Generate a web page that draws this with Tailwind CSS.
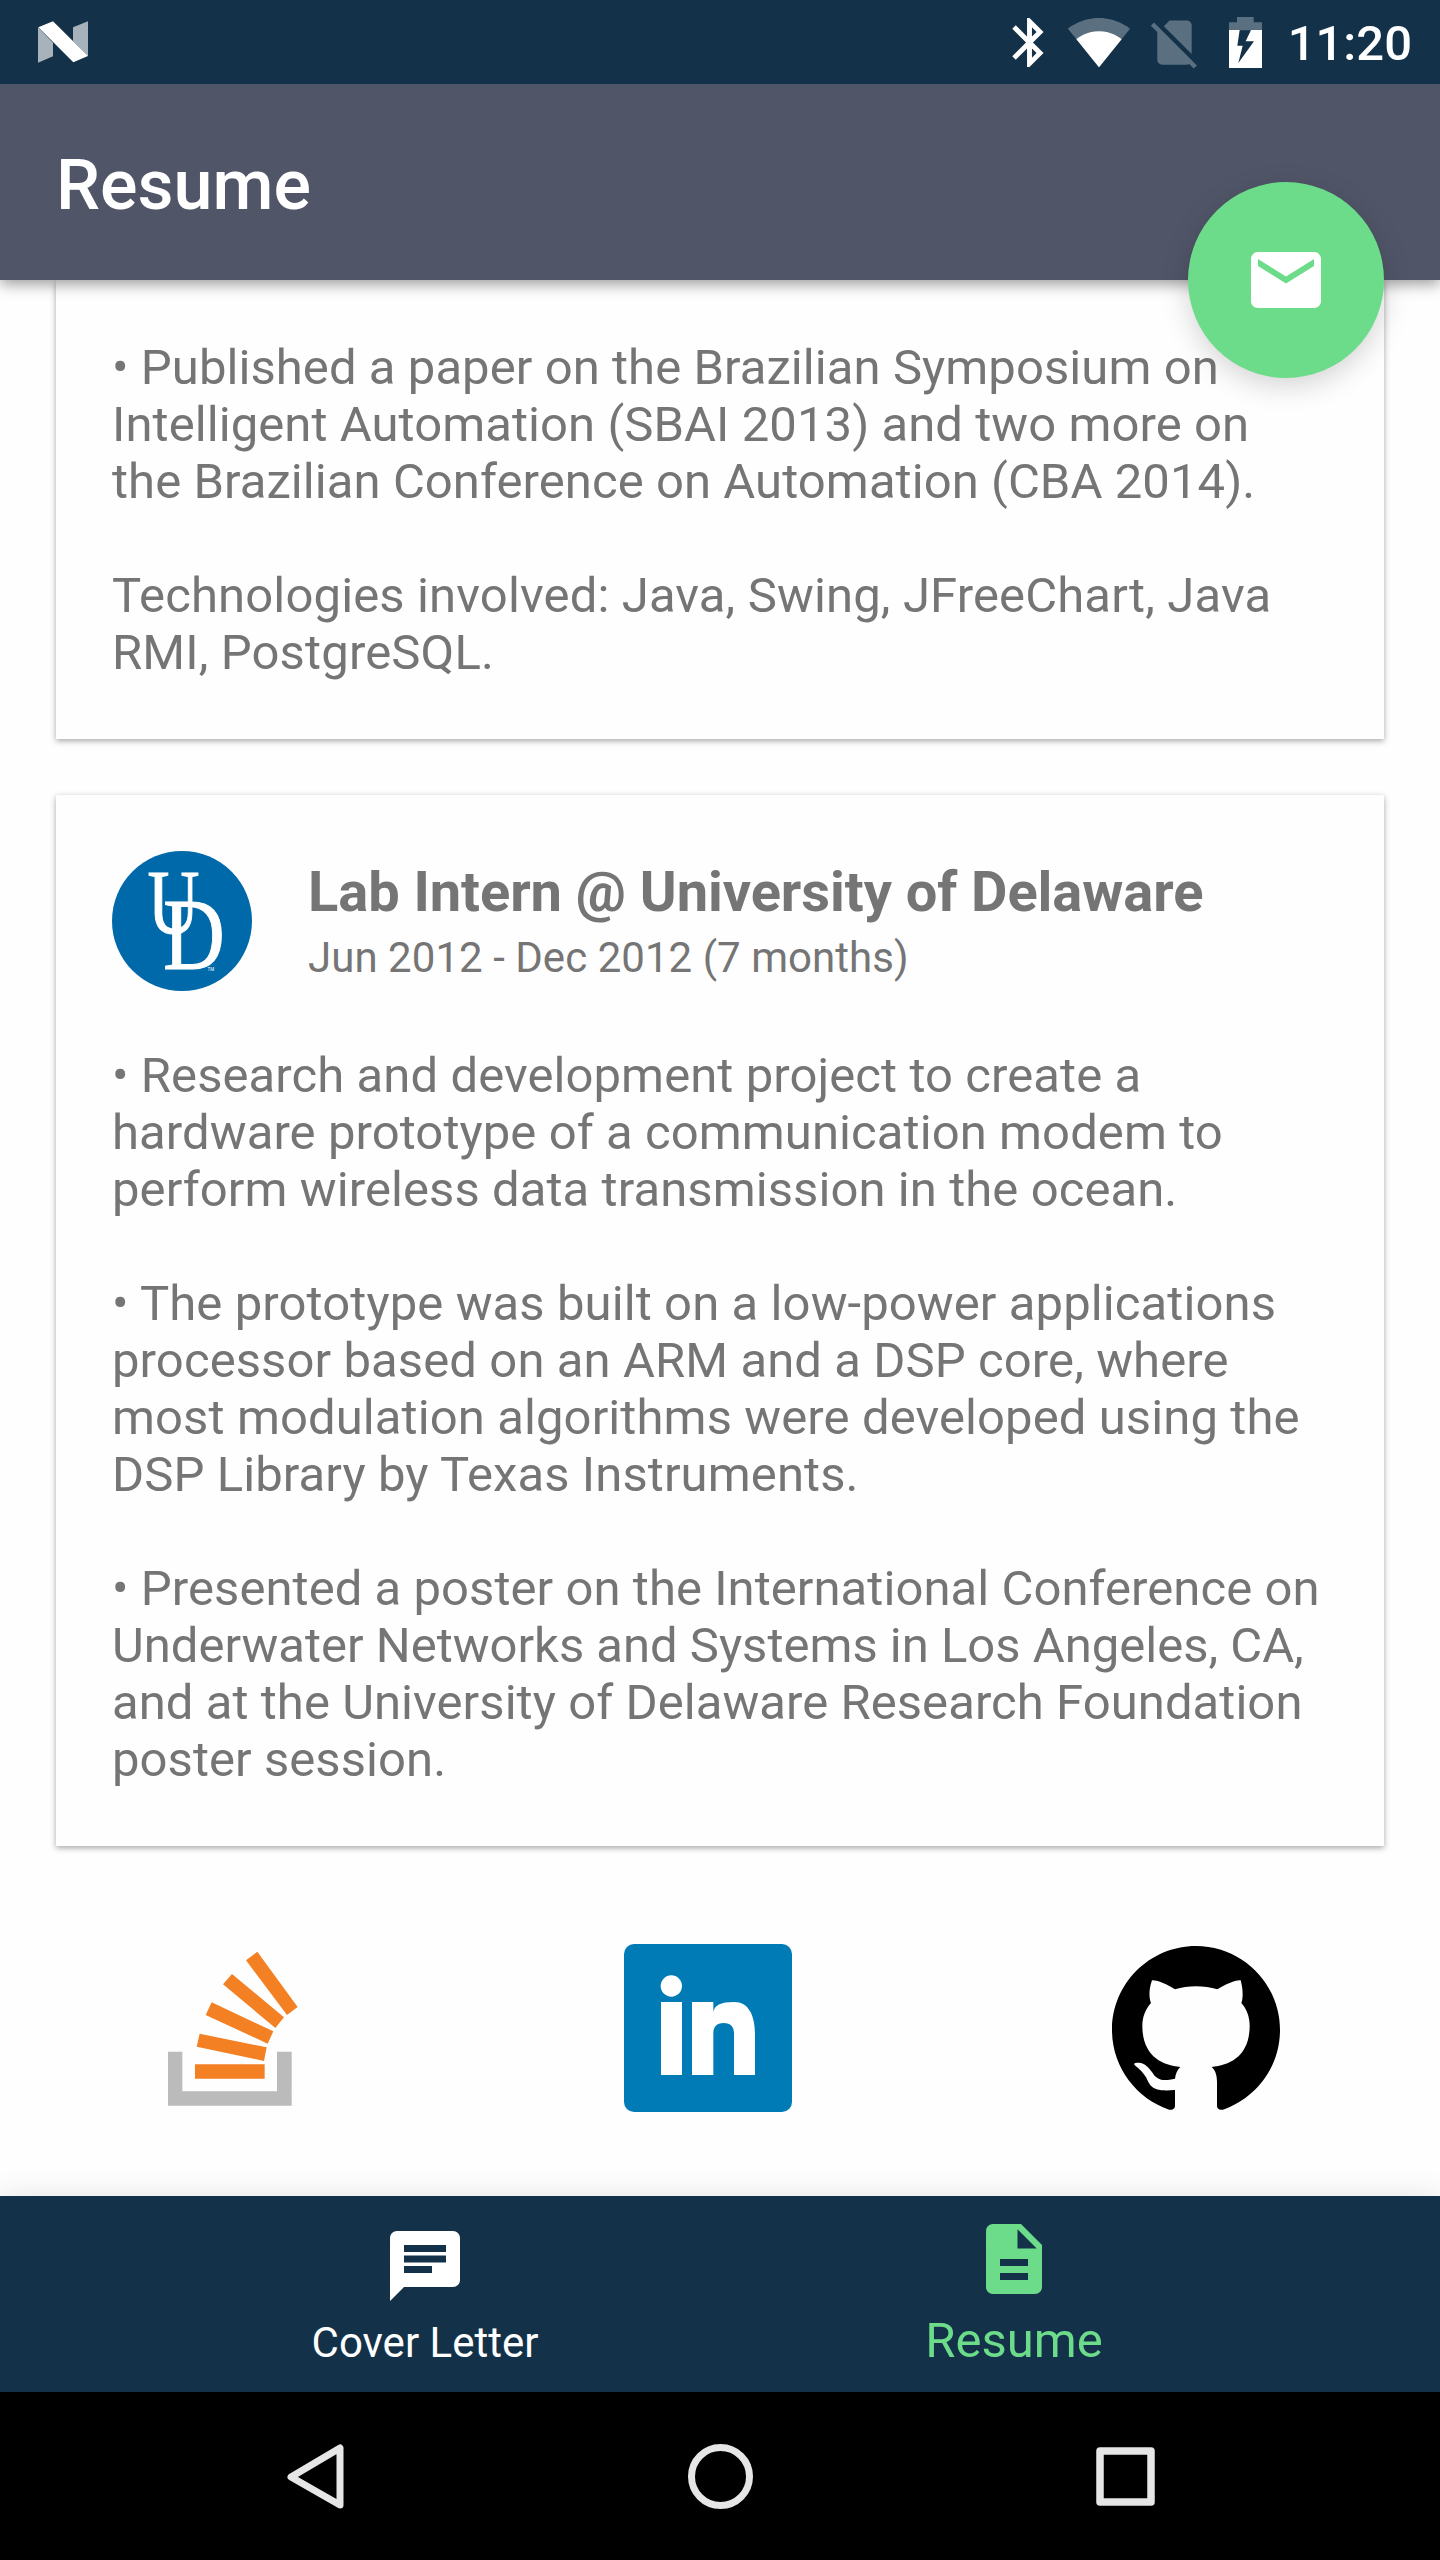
<!DOCTYPE html>
<html lang="en">
<head>
<meta charset="utf-8">
<title>Resume</title>
<script src="https://cdn.jsdelivr.net/npm/@tailwindcss/browser@4"></script>
</head>
<body class="bg-[#fefefe] font-['Roboto',sans-serif]">
<div class="relative flex h-[2560px] w-[1440px] flex-col overflow-hidden bg-[#fefefe]">

  <!-- Status bar -->
  <header class="z-20 flex h-[84px] shrink-0 items-center bg-[#133249] pl-[38px] pr-7">
    <svg class="h-[42px] w-[50px]" viewBox="114 63 150 126">
      <path fill="#a7b2bb" d="M114 82L159 128V169L114 188ZM219 82L264 64V169L219 123Z"/>
      <path fill="#fff" d="M115 82L159 64L264 168L220 187Z"/>
    </svg>
    <div class="ml-auto flex items-center">
      <svg class="h-[59px] w-[59px]" viewBox="0 0 24 24" fill="#fff"><path d="M17.71 7.71L12 2h-1v7.59L6.41 5 5 6.41 10.59 12 5 17.59 6.41 19 11 14.41V22h1l5.71-5.71-4.3-4.29 4.3-4.29zM13 5.83l1.88 1.88L13 9.59V5.83zm1.88 10.46L13 18.17v-3.76l1.88 1.88z"/></svg>
      <svg class="ml-2 h-16 w-16" viewBox="0 0 24 24" fill="#fff"><path fill="#5a7080" d="M12.01 21.49L23.64 7c-.45-.34-4.93-4-11.64-4C5.28 3 .81 6.66.36 7l11.63 14.49.01.01.01-.01z"/><path d="M3.53 10.95l8.46 10.54.01.01.01-.01 8.46-10.54C20.04 10.62 16.81 8 12 8c-4.81 0-8.04 2.62-8.47 2.95z"/></svg>
      <svg class="ml-3.5 h-[59px] w-[59px]" viewBox="0 0 24 24" fill="#5a7080"><path d="M18.99 5c0-1.1-.89-2-1.99-2h-7L7.66 5.34 19 16.68 18.99 5zM3.65 3.88L2.38 5.15 5 7.77V19c0 1.1.9 2 2 2h10.01c.35 0 .67-.1.96-.26l1.88 1.88 1.27-1.27L3.65 3.88z"/></svg>
      <svg class="ml-[25px] h-[51px] w-[33px]" viewBox="807 48 99 153">
        <path fill="#5a7080" d="M831 48H881V64H906V88H807V64H831Z"/>
        <path fill="#fff" fill-rule="evenodd" d="M807 87H906V201H807ZM839 87L832 134H848L835 186L882 121H857L873 87Z"/>
      </svg>
      <span class="ml-[26px] pt-1 text-[49px] leading-[58px] font-medium text-white">11:20</span>
    </div>
  </header>

  <!-- App bar -->
  <div class="z-10 flex h-[196px] shrink-0 items-center bg-[#505568] px-14 pt-1.5 shadow-[0_4px_14px_rgba(0,0,0,0.4)]">
    <h1 class="text-[70px] leading-[82px] font-medium text-white">Resume</h1>
  </div>

  <button class="absolute top-[182px] left-[1188px] z-30 flex h-[196px] w-[196px] items-center justify-center rounded-full bg-[#6ddc8a] shadow-[0_8px_28px_rgba(0,0,0,0.17)]" aria-label="Email">
    <svg class="h-[84px] w-[84px]" viewBox="0 0 24 24" fill="#fff"><path d="M20 4H4c-1.1 0-1.99.9-1.99 2L2 18c0 1.1.9 2 2 2h16c1.1 0 2-.9 2-2V6c0-1.1-.9-2-2-2zm0 4l-8 5-8-5V6l8 5 8-5v2z"/></svg>
  </button>

  <main class="flex min-h-0 flex-1 flex-col px-14">
    <section class="h-[459px] shrink-0 bg-[#fefefe] px-14 pt-[59px] text-[49px] leading-[57px] tracking-[0.07px] text-[#757575] shadow-[0_2px_6px_rgba(0,0,0,0.35)]">
      <p>• Published a paper on the Brazilian Symposium on<br>Intelligent Automation (SBAI 2013) and two more on<br>the Brazilian Conference on Automation (CBA 2014).</p>
      <p class="mt-[57px] tracking-[0.14px]">Technologies involved: Java, Swing, JFreeChart, Java<br>RMI, PostgreSQL.</p>
    </section>

    <section class="mt-14 h-[1051px] shrink-0 bg-[#fefefe] p-14 text-[49px] leading-[57px] text-[#757575] shadow-[0_2px_6px_rgba(0,0,0,0.35)]">
      <div class="flex items-center gap-14">
        <svg class="h-[140px] w-[140px]" viewBox="0 0 140 140">
          <circle cx="70" cy="70" r="70" fill="#0069aa"/>
          <g fill="#fff" stroke="#fff" font-family="Liberation Serif, serif">
            <text transform="translate(35.5 82) scale(.8 1)" font-size="90" stroke-width="1">U</text>
            <text transform="translate(51 118) scale(.84 1)" font-size="102" stroke-width="1">D</text>
          </g>
          <text x="95.500" y="119.500" font-size="4.500" fill="#fff" font-family="Roboto, sans-serif">TM</text>
        </svg>
        <div class="-my-2">
          <h2 class="text-[56px] leading-[66px] font-bold tracking-[-0.06px]">Lab Intern @ University of Delaware</h2>
          <p class="mt-2 text-[42px] leading-[50px] tracking-[0.04px]">Jun 2012 - Dec 2012 (7 months)</p>
        </div>
      </div>
      <p class="mt-14 tracking-[0.08px]">• Research and development project to create a<br>hardware prototype of a communication modem to<br>perform wireless data transmission in the ocean.</p>
      <p class="mt-[57px] tracking-[0.1px]">• The prototype was built on a low-power applications<br>processor based on an ARM and a DSP core, where<br>most modulation algorithms were developed using the<br>DSP Library by Texas Instruments.</p>
      <p class="mt-[57px] tracking-[0.06px]">• Presented a poster on the International Conference on<br><span class="tracking-normal">Underwater Networks and Systems in Los Angeles, CA,</span><br>and at the University of Delaware Research Foundation<br>poster session.</p>
    </section>

    <!-- Profile links -->
    <div class="mt-[98px] flex items-start pl-[92px]">
      <svg class="h-[168px] w-[168px]" viewBox="144 132 504 504">
        <path fill="#bbb" d="M204 455H247V574H531V455H575V617H204Z"/>
        <path fill="#f48024" d="M285 493H494V536H285ZM299 401L500 442L492 483L290 440ZM335 307L520 394L503 431L317 345ZM396 222L552 352L526 384L369 253ZM472 155L593 321L561 345L438 181Z"/>
      </svg>
      <svg class="ml-[308px] h-[168px] w-[168px]" viewBox="132 132 504 504">
        <rect x="132" y="132" width="504" height="504" rx="30" fill="#007bb6"/>
        <g fill="#fff"><circle cx="274" cy="258" r="32"/><rect x="243" y="306" width="63" height="219"/>
        <path d="M336 306H400V336C404 316 420 306 463 306C505 306 525 345 525 402V525H462V400C462 380 452 369 431 369C410 369 400 380 400 400V525H336Z"/></g>
      </svg>
      <svg class="ml-[320px] h-[168px] w-[168px]" viewBox="126 132 504 504">
        <path d="M378 138C239 138 126 251 126 390C126 501 198 595 297 629C310 631 315 624 315 617V570C245 577 241 558 228 532C218 514 205 504 196 497C188 490 194 488 206 488C225 489 238 504 248 519C261 540 278 545 315 536C317 520 322 510 331 501C275 495 217 468 217 377C217 350 227 327 243 309C240 302 233 278 246 241C246 241 269 239 315 268C335 262 356 259 378 259C400 259 422 262 442 268C489 239 512 241 512 241C522 278 517 302 514 309C530 327 539 350 539 377C539 468 481 495 425 501C435 510 441 524 441 545V617C441 624 446 631 459 629C558 595 630 501 630 390C630 251 517 138 378 138Z"/>
      </svg>
    </div>
  </main>

  <!-- Bottom tabs -->
  <nav class="z-10 flex h-[196px] shrink-0 justify-center gap-px bg-[#133249] pr-px shadow-[0_0_28px_rgba(0,0,0,0.11)]">
    <div class="flex w-[588px] flex-col items-center pt-7 text-[42px] leading-[50px] text-white">
      <svg class="h-[84px] w-[84px]" viewBox="0 0 24 24" fill="currentColor"><path d="M20 2H4c-1.100 0-1.990.9-1.990 2L2 22l4-4h14c1.100 0 2-.9 2-2V4c0-1.100-.9-2-2-2zM6 9h12v2H6V9zm8 5H6v-2h8v2zm4-6H6V6h12v2z"/></svg>
      <span class="mt-2.5">Cover Letter</span>
    </div>
    <div class="flex w-[588px] flex-col items-center pt-[21px] text-[49px] leading-[58px] text-[#6ddc8a]">
      <svg class="h-[84px] w-[84px]" viewBox="0 0 24 24" fill="currentColor"><path d="M14 2H6c-1.100 0-1.990.9-1.990 2L4 20c0 1.100.89 2 1.990 2H18c1.100 0 2-.9 2-2V8l-6-6zm2 16H8v-2h8v2zm0-4H8v-2h8v2zm-3-5V3.500L18.500 9H13z"/></svg>
      <span class="mt-[11px]">Resume</span>
    </div>
  </nav>

  <!-- System navigation -->
  <footer class="z-10 flex h-[168px] shrink-0 items-center justify-center gap-[321px] bg-black">
    <svg class="h-[84px] w-[84px]" viewBox="0 0 84 84" fill="none" stroke="#e6e6e6" stroke-width="7" stroke-linejoin="round"><path d="M67 14V71L18 43Z"/></svg>
    <svg class="h-[84px] w-[84px]" viewBox="0 0 84 84" fill="none" stroke="#e6e6e6" stroke-width="7"><circle cx="42.500" cy="42.500" r="29"/></svg>
    <svg class="h-[84px] w-[84px]" viewBox="0 0 84 84" fill="none" stroke="#e6e6e6" stroke-width="7.500" stroke-linejoin="round"><rect x="17" y="17" width="51" height="51"/></svg>
  </footer>
</div>
</body>
</html>
